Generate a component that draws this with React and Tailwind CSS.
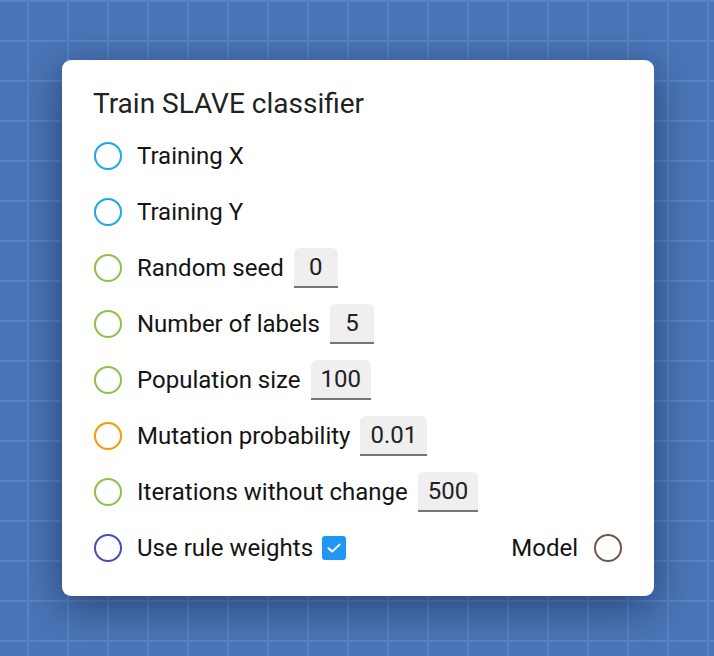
import React from "react";

const Ring = ({ color }) => (
  <span className={`block h-[28px] w-[28px] shrink-0 rounded-full border-2 ${color}`} />
);

const Field = ({ value }) => (
  <span className="ml-[10px] flex h-[40px] min-w-[44px] items-center justify-center rounded-t-[6px] border-b-2 border-[#767676] bg-[#efefef] px-[10px] text-[24px] leading-[28px] text-[#222]">
    {value}
  </span>
);

const Row = ({ color, label, value, children }) => (
  <div className="flex h-[56px] items-center">
    <Ring color={color} />
    <span className="ml-[15px] text-[24px] leading-[28px] text-[#141414]">{label}</span>
    {value !== undefined && <Field value={value} />}
    {children}
  </div>
);

export default function App() {
  return (
    <div
      className="h-[656px] w-full overflow-hidden bg-[#4b75b7] bg-[linear-gradient(to_right,#5884c5_2px,transparent_2px),linear-gradient(to_bottom,#5884c5_2px,transparent_2px)] bg-[length:40px_40px] bg-[position:27px_0px] pl-[62px] pt-[60px]"
      style={{ fontFamily: "Roboto, 'Noto Sans', sans-serif" }}
    >
      <div className="w-[592px] rounded-[9px] bg-white px-[32px] pb-[20px] pt-[26px] shadow-[0_10px_40px_rgba(10,25,60,0.55)]">
        <div className="-ml-px h-[36px] text-[28px] leading-[36px] text-[#222]">Train SLAVE classifier</div>
        <div className="mt-[6px] flex flex-col">
          <Row color="border-[#1aa7f0]" label="Training X" />
          <Row color="border-[#1aa7f0]" label="Training Y" />
          <Row color="border-[#8bc34a]" label="Random seed" value="0" />
          <Row color="border-[#8bc34a]" label="Number of labels" value="5" />
          <Row color="border-[#8bc34a]" label="Population size" value="100" />
          <Row color="border-[#ff9800]" label="Mutation probability" value="0.01" />
          <Row color="border-[#8bc34a]" label="Iterations without change" value="500" />
          <div className="flex h-[56px] items-center">
            <Ring color="border-[#3f51b5]" />
            <span className="ml-[15px] text-[24px] leading-[28px] text-[#141414]">Use rule weights</span>
            <span className="ml-[9px] flex h-[24px] w-[24px] items-center justify-center rounded-[3px] bg-[#2196f3]">
              <svg width="16" height="16" viewBox="0 0 16 16" fill="none">
                <path d="M2.5 8.2 L6.2 11.6 L13.5 4.6" stroke="white" strokeWidth="2" strokeLinecap="round" strokeLinejoin="round" />
              </svg>
            </span>
            <span className="ml-auto text-[24px] leading-[28px] text-[#141414]">Model</span>
            <span className="ml-[16px]">
              <Ring color="border-[#795548]" />
            </span>
          </div>
        </div>
      </div>
    </div>
  );
}
